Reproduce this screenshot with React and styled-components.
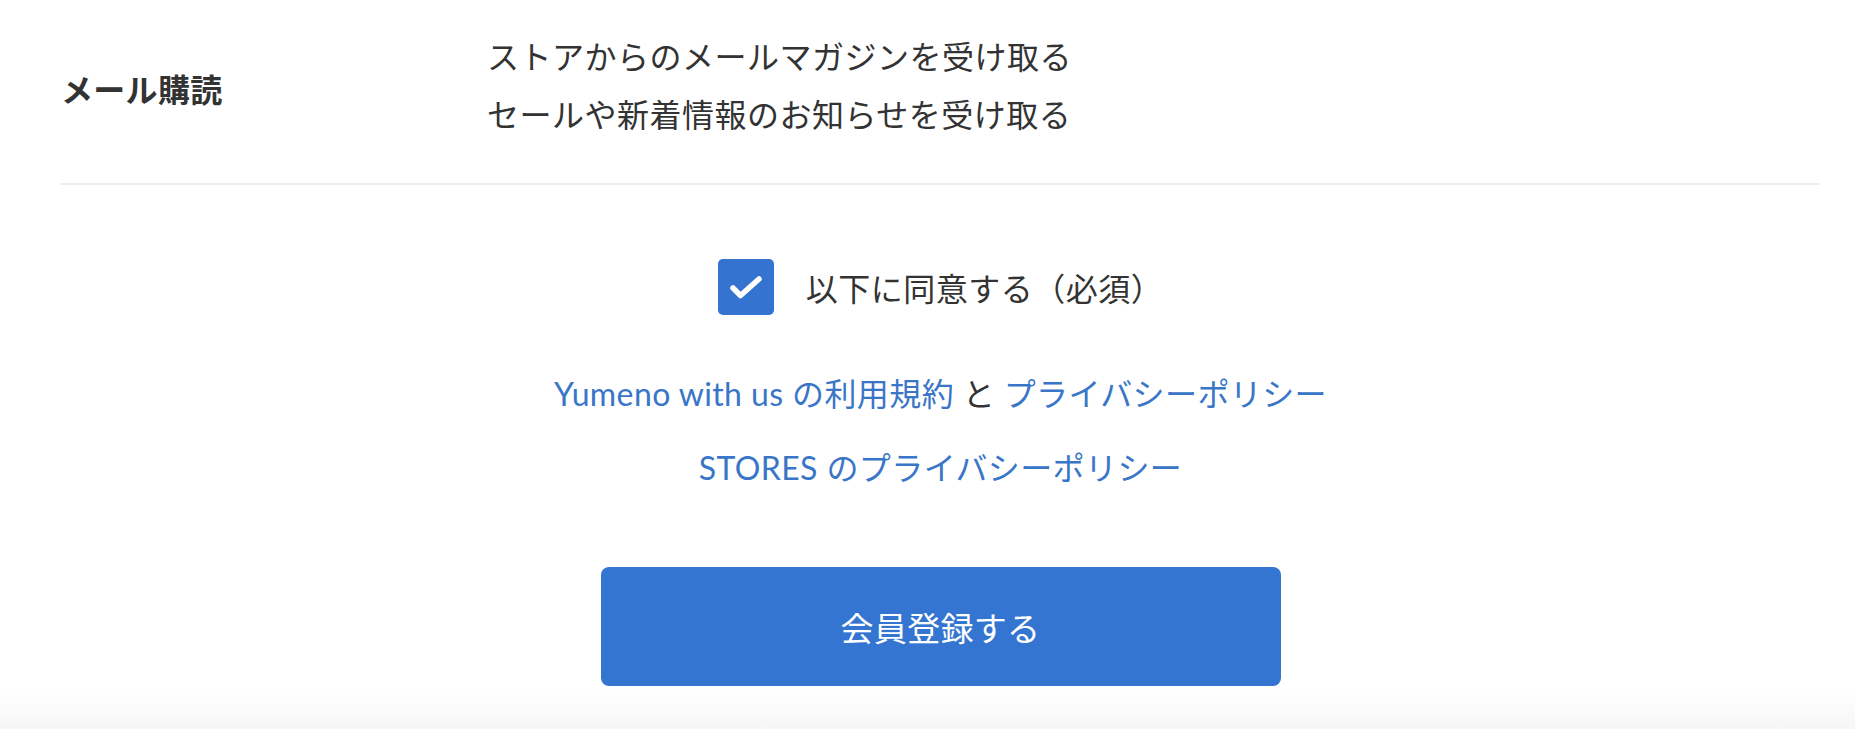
import React from "react"
import styled, {createGlobalStyle} from "styled-components"

const GlobalStyle = createGlobalStyle`
  html, body {
    margin: 0;
    padding: 0;
    background: #ffffff;
  }
  body {
    font-family: Lato, "Noto Sans CJK JP", sans-serif;
    color: #333333;
  }
`

const Page = styled.div`
  min-height: 729px;
  display: flex;
  flex-direction: column;
  background: linear-gradient(to bottom, #ffffff 0px, #ffffff 690px, #f6f6f6 729px);
`

const Form = styled.div`
  width: 1759px;
  margin-left: 61px;
`

const Row = styled.div`
  display: grid;
  grid-template-columns: 426px 1fr;
  padding: 28px 0 39px;
  border-bottom: 2px solid #ececec;
`

const Label = styled.div`
  align-self: center;
  margin-top: 4px;
  font-size: 32px;
  letter-spacing: 0.3px;
  font-weight: 700;
  color: #333333;
`

const Options = styled.div`
  display: flex;
  flex-direction: column;
`

const Option = styled.div`
  font-size: 32px;
  letter-spacing: 0.5px;
  line-height: 58px;
  color: #333333;
`

const Agreement = styled.div`
  display: flex;
  flex-direction: column;
  align-items: center;
  padding-top: 74px;
`

const CheckRow = styled.label`
  display: flex;
  align-items: center;
  gap: 32px;
  font-size: 32px;
  letter-spacing: 0.5px;
  color: #333333;
`

const Box = styled.span`
  width: 56px;
  height: 56px;
  border-radius: 5px;
  background: #3474d0;
  display: flex;
  align-items: center;
  justify-content: center;
`

const Links = styled.div`
  display: flex;
  flex-direction: column;
  align-items: center;
  gap: 26px;
  margin-top: 55px;
`

const LinkLine = styled.div`
  font-size: 32px;
  letter-spacing: 0.4px;
  line-height: 48px;
  color: #333333;
`

const Link = styled.a`
  color: #3a76c8;
  text-decoration: none;
`

const Submit = styled.button`
  margin-top: 75px;
  width: 680px;
  height: 119px;
  border: none;
  border-radius: 8px;
  background: #3475d1;
  color: #ffffff;
  font-family: Lato, "Noto Sans CJK JP", sans-serif;
  font-size: 33px;
  letter-spacing: 0.3px;
  cursor: pointer;
`

const Check = () => (
  <svg width="56" height="56" viewBox="0 0 56 56" fill="none">
    <path d="M15 29 L22.5 36.5 L41 20" stroke="#ffffff" strokeWidth="5.5" strokeLinecap="round" strokeLinejoin="round"/>
  </svg>
)

const App = () => {
  return (
    <>
      <GlobalStyle/>
      <Page>
        <Form>
          <Row>
            <Label>メール購読</Label>
            <Options>
              <Option>ストアからのメールマガジンを受け取る</Option>
              <Option>セールや新着情報のお知らせを受け取る</Option>
            </Options>
          </Row>
          <Agreement>
            <CheckRow>
              <Box><Check/></Box>
              以下に同意する（必須）
            </CheckRow>
            <Links>
              <LinkLine>
                <Link href="#">Yumeno with us の利用規約</Link> と <Link href="#">プライバシーポリシー</Link>
              </LinkLine>
              <LinkLine>
                <Link href="#">STORES のプライバシーポリシー</Link>
              </LinkLine>
            </Links>
            <Submit>会員登録する</Submit>
          </Agreement>
        </Form>
      </Page>
    </>
  )
}

export default App
